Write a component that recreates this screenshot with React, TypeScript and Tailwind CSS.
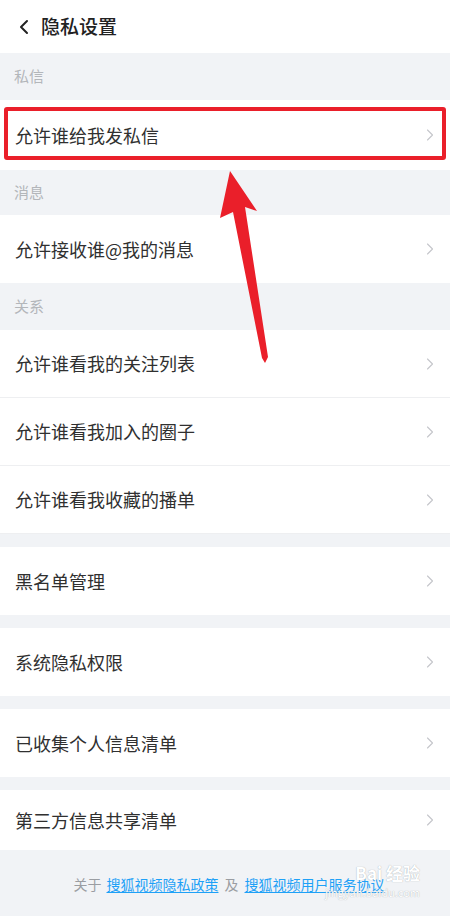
import { ChevronLeft, ChevronRight } from "lucide-react";

const font = { fontFamily: '"Noto Sans CJK SC", "Noto Sans", sans-serif' };

function SectionLabel({ label, height }: { label: string; height: string }) {
  return (
    <div className={`flex items-center bg-[#f1f3f6] px-[14px] text-[15px] text-[#b3b6ba] ${height}`}>
      {label}
    </div>
  );
}

function Row({ title, height = "h-[68px]", divider = false }: { title: string; height?: string; divider?: boolean }) {
  return (
    <div
      className={`flex items-center justify-between bg-white pl-[15px] pr-[10px] ${height} ${
        divider ? "border-b border-[#eeeff1]" : ""
      }`}
    >
      <span className="text-[18px] text-[#303030]">{title}</span>
      <ChevronRight className="size-[20px] text-[#c4c6ca]" strokeWidth={1.3} aria-hidden />
    </div>
  );
}

function Gap() {
  return <div className="h-[13px] bg-[#f1f3f6]" />;
}

export default function App() {
  return (
    <div className="relative h-[920px] w-[450px] overflow-hidden bg-white" style={font}>
      <header className="flex h-[53px] items-center gap-[5px] pl-[12px]">
        <ChevronLeft className="size-[24px] text-[#222]" strokeWidth={2} aria-hidden />
        <h1 className="text-[19px] font-medium text-[#222]">隐私设置</h1>
      </header>

      <SectionLabel label="私信" height="h-[47px]" />
      <Row title="允许谁给我发私信" height="h-[70px]" />

      <SectionLabel label="消息" height="h-[45px]" />
      <Row title="允许接收谁@我的消息" />

      <SectionLabel label="关系" height="h-[47px]" />
      <Row title="允许谁看我的关注列表" divider />
      <Row title="允许谁看我加入的圈子" divider />
      <Row title="允许谁看我收藏的播单" divider />

      <Gap />
      <Row title="黑名单管理" />
      <Gap />
      <Row title="系统隐私权限" />
      <Gap />
      <Row title="已收集个人信息清单" />
      <Gap />
      <Row title="第三方信息共享清单" height="h-[60px]" />

      <footer className="relative flex h-[66px] items-start justify-center bg-[#f1f3f6] pl-[8px] pt-[24px] text-[14px]">
        <span className="text-[#9a9da2]">关于</span>
        <span className="ml-[5px] text-[#1ea1f7] underline underline-offset-2">搜狐视频隐私政策</span>
        <span className="mx-[6px] text-[#9a9da2]">及</span>
        <span className="text-[#1ea1f7] underline underline-offset-2">搜狐视频用户服务协议</span>
        <div className="pointer-events-none absolute right-[30px] top-[14px] flex flex-col items-end leading-none text-white [text-shadow:0_0_1px_#9aa0a6]">
          <span className="text-[17px] font-bold">Bai 经验</span>
          <span className="mt-[6px] text-[11px]">jingyan.baidu.com</span>
        </div>
      </footer>
      <div className="mx-[22px] h-[10px] bg-white" />

      {/* annotation overlay */}
      <div className="pointer-events-none absolute left-[4px] top-[107px] h-[53px] w-[442px] rounded-[3px] border-[4px] border-[#ea1f2a]" />
      <svg className="pointer-events-none absolute left-0 top-0" width="450" height="920" aria-hidden>
        <polygon
          points="230,171 257,211 245,207 268,357 265,363 262,358 233,212 220,218"
          fill="#ea1f2a"
        />
      </svg>
    </div>
  );
}
